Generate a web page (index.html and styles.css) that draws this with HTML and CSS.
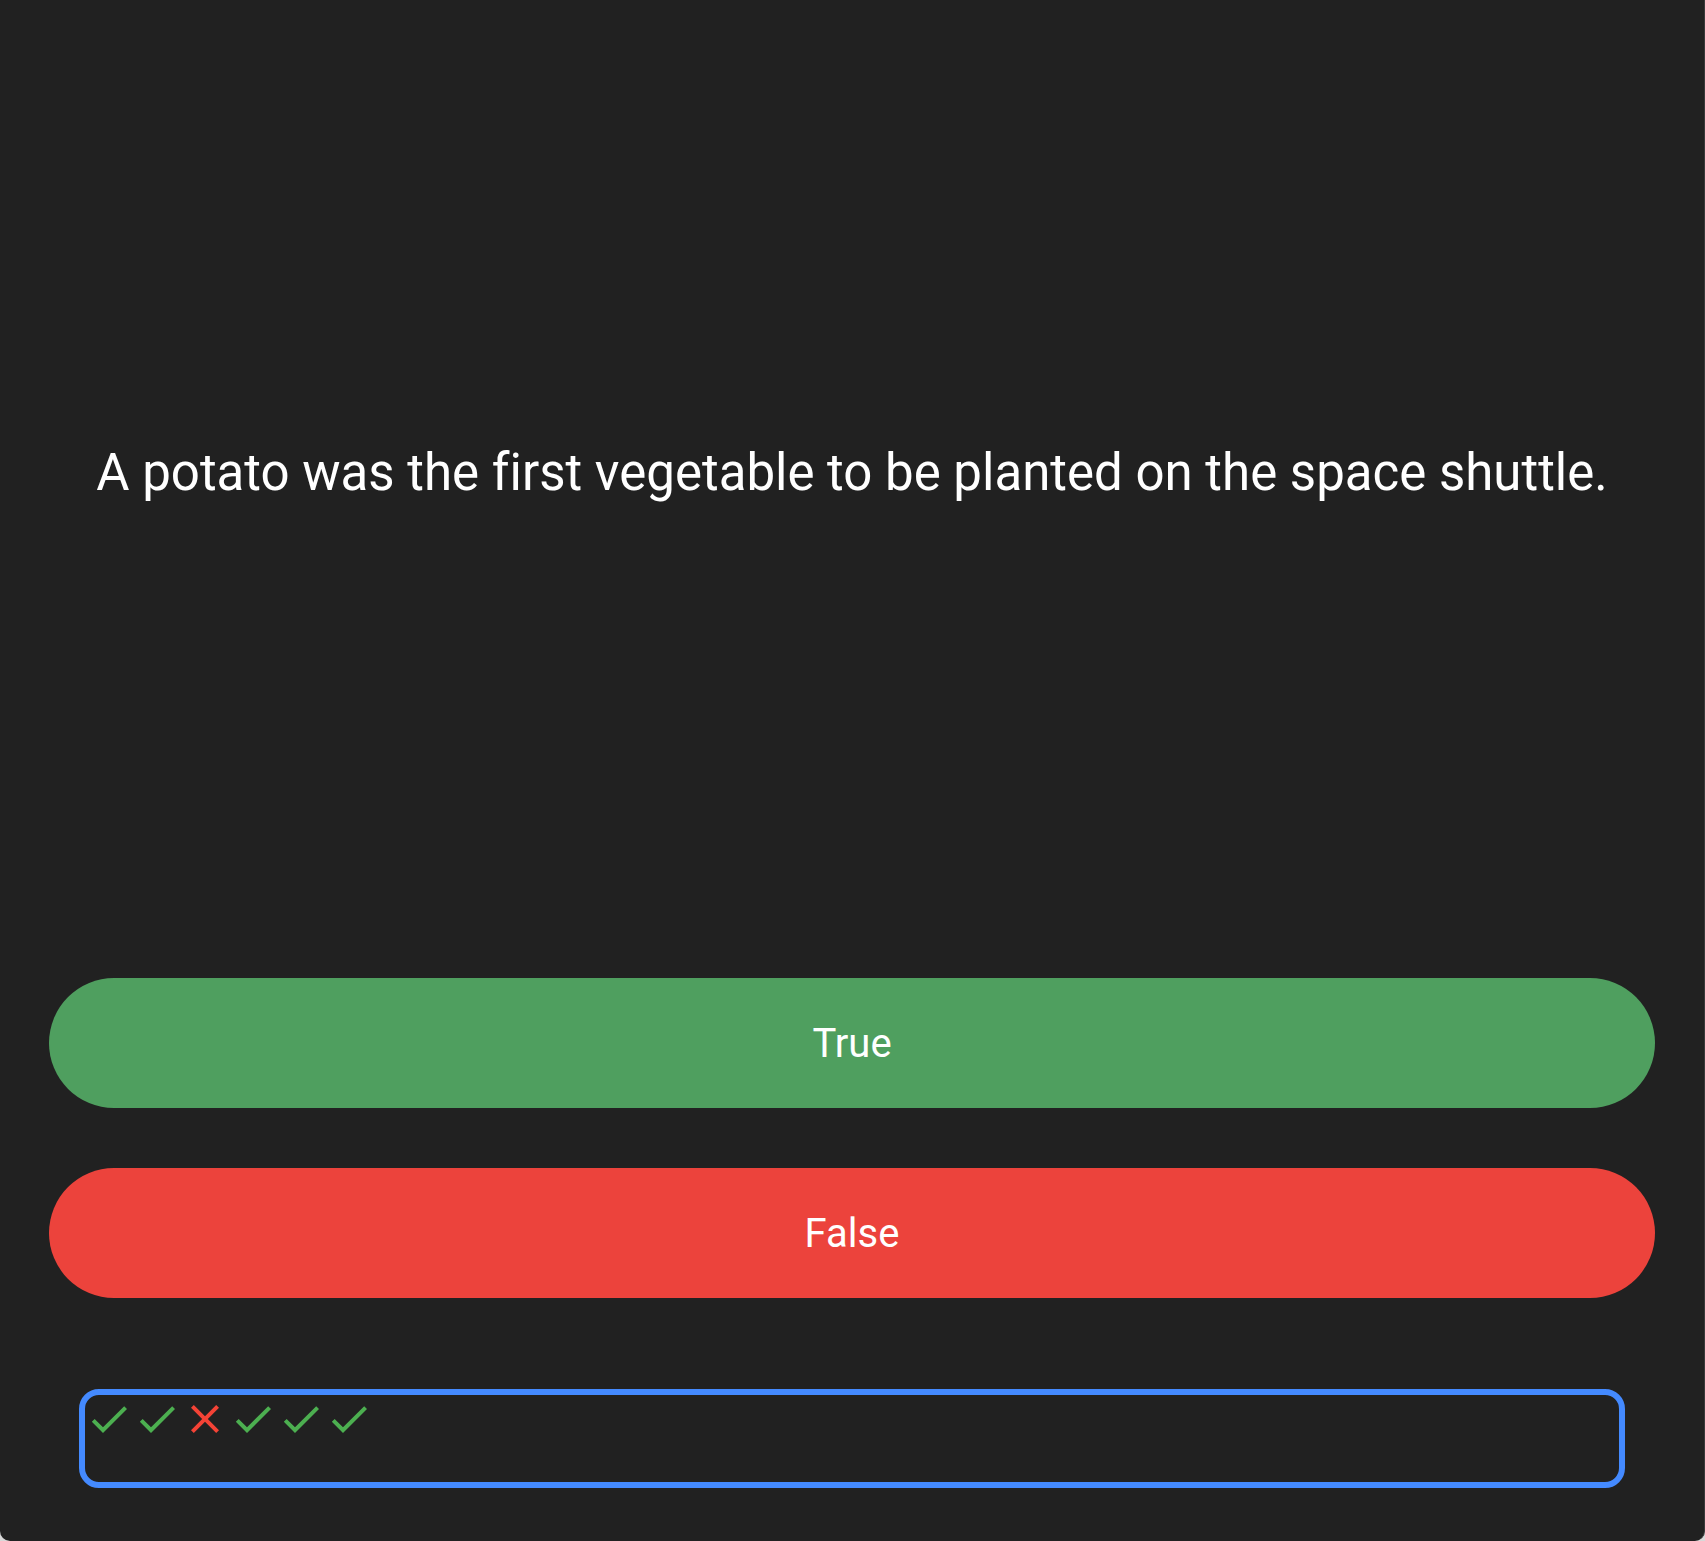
FILE: index.html
```html
<!DOCTYPE html>
<html lang="en">
<head>
<meta charset="utf-8">
<title>Quizzler</title>
<link rel="stylesheet" href="styles.css">
</head>
<body>
<div class="app">
  <div class="question">
    <p class="question-text">A potato was the first vegetable to be planted on the space shuttle.</p>
  </div>
  <div class="answers">
    <button class="btn btn-true">True</button>
    <button class="btn btn-false">False</button>
  </div>
  <div class="score">
    <svg class="icon check" viewBox="0 0 24 24"><path d="M9 16.17L4.83 12l-1.42 1.41L9 19 21 7l-1.41-1.41z"/></svg>
    <svg class="icon check" viewBox="0 0 24 24"><path d="M9 16.17L4.83 12l-1.42 1.41L9 19 21 7l-1.41-1.41z"/></svg>
    <svg class="icon cross" viewBox="0 0 24 24"><path d="M19 6.41L17.59 5 12 10.59 6.41 5 5 6.41 10.59 12 5 17.59 6.41 19 12 13.41 17.59 19 19 17.59 13.41 12z"/></svg>
    <svg class="icon check" viewBox="0 0 24 24"><path d="M9 16.17L4.83 12l-1.42 1.41L9 19 21 7l-1.41-1.41z"/></svg>
    <svg class="icon check" viewBox="0 0 24 24"><path d="M9 16.17L4.83 12l-1.42 1.41L9 19 21 7l-1.41-1.41z"/></svg>
    <svg class="icon check" viewBox="0 0 24 24"><path d="M9 16.17L4.83 12l-1.42 1.41L9 19 21 7l-1.41-1.41z"/></svg>
  </div>
</div>
</body>
</html>
```

FILE: styles.css
```css
html, body {
  margin: 0;
  padding: 0;
  background: #d8d8d8;
}

.app {
  box-sizing: border-box;
  width: 1705px;
  height: 1541px;
  background: #212121;
  border-right: 1px solid #3a3a3a;
  border-radius: 0 0 10px 10px;
  display: flex;
  flex-direction: column;
  font-family: Roboto, "Liberation Sans", sans-serif;
  overflow: hidden;
}

.question {
  height: 945px;
  display: flex;
  align-items: center;
  justify-content: center;
  padding: 0 40px;
}

.question-text {
  margin: 0;
  color: #ffffff;
  font-size: 51px;
  text-align: center;
  font-weight: 400;
  font-variant-ligatures: none;
}

.answers {
  display: flex;
  flex-direction: column;
  gap: 60px;
  padding: 33px 49px 0 49px;
}

.btn {
  height: 130px;
  border: none;
  border-radius: 65px;
  color: #ffffff;
  font-family: Roboto, "Liberation Sans", sans-serif;
  font-size: 40px;
  font-weight: 400;
  padding: 0;
}

.btn-true {
  background: #4f9f5f;
}

.btn-false {
  background: #ec433c;
}

.score {
  box-sizing: border-box;
  margin: 91px 79px 0 79px;
  height: 99px;
  border: 6px solid #448aff;
  border-radius: 20px;
  display: flex;
  align-items: flex-start;
}

.icon {
  width: 48px;
  height: 48px;
  flex: none;
}

.check {
  fill: #4caf50;
}

.cross {
  fill: #f44336;
}
```
